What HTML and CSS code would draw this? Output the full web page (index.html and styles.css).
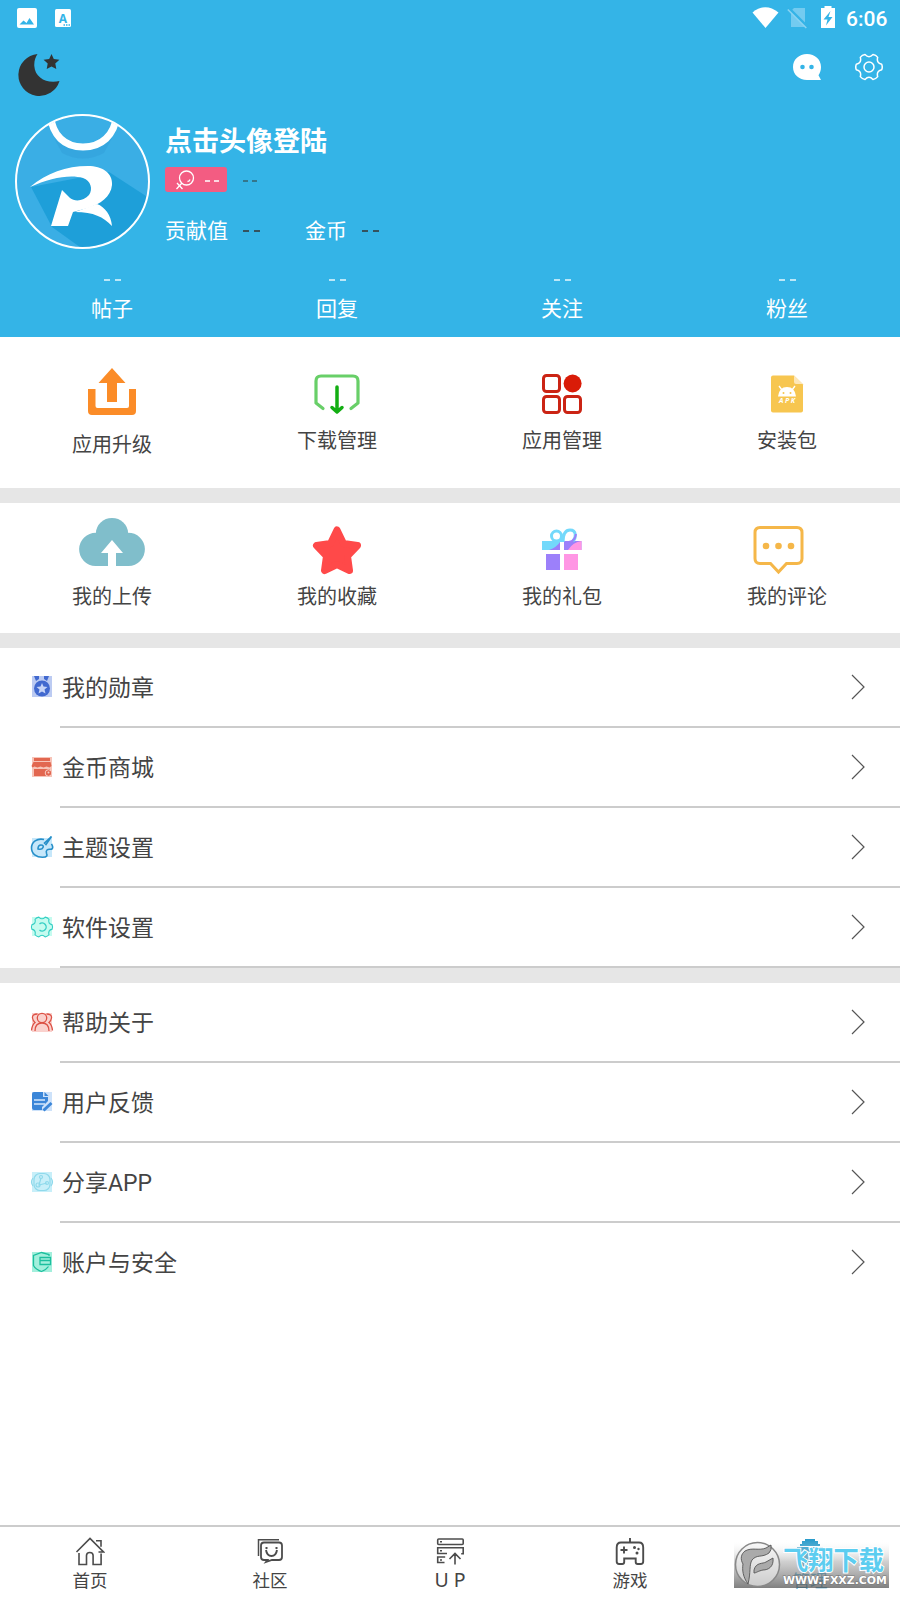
FILE: index.html
```html
<!DOCTYPE html>
<html lang="zh-CN">
<head>
<meta charset="utf-8">
<title>我的</title>
<link rel="stylesheet" href="styles.css">
</head>
<body>
<div class="screen">
  <header class="header">
    <div class="status">
      <svg class="status-left" viewBox="16 6 56 24" width="56" height="24">
        <rect x="17" y="8" width="20" height="20" rx="2" fill="#fff"/>
        <path d="M19.500 24.500l4-4 3 2.500 3-5 4.500 6.500z" fill="#34b4e7"/>
        <rect x="55" y="9" width="16" height="18" rx="1.500" fill="#fff"/>
        <text class="badge-letter" x="63" y="22.500" text-anchor="middle">A</text>
        <path d="M63.500 25h1.500M66 25h1.500M68.500 25h1.500" stroke="#34b4e7" stroke-width="1.500"/>
      </svg>
      <svg class="status-right" viewBox="752 5 85 24" width="85" height="24">
        <path d="M752.500 12.500q12.700-10.500 26 0L765.500 28z" fill="#fff"/>
        <path d="M794 8h11v19h-14V11z" fill="#73cbf0"/>
        <path d="M788.500 8l19 19" stroke="#34b4e7" stroke-width="3"/>
        <path d="M787.800 9.500l18.500 18.500" stroke="#8bd4f2" stroke-width="1.500"/>
        <path d="M821 8h3.500V6h7v2H835v20h-14z" fill="#fff"/>
        <path d="M830.500 11l-7 8.500h4l-1.500 6 6.500-8.500h-4z" fill="#34b4e7"/>
      </svg>
      <span class="clock">6:06</span>
    </div>
    <div class="toolbar">
      <svg viewBox="18 53 42 44" width="42" height="44">
        <path d="M37.500 54A21 21 0 1 0 59.500 81C47 84 35 78 34.300 66 34 61 35.500 57 37.500 54z" fill="#333"/>
        <path d="M51.500 54l2.300 5 5.600.7-4.100 3.800 1 5.500-4.800-2.600-4.800 2.600 1-5.500-4.100-3.800 5.600-.7z" fill="#333"/>
      </svg>
      <svg class="tool-chat" viewBox="792 53 30 28" width="30" height="28">
        <path d="M807 54c8 0 14 5.500 14 13 0 3.600-1 6-2.500 8.200l2.500 4.800h-14c-8 0-14-5.500-14-13s6-13 14-13z" fill="#fff"/>
        <circle cx="802.500" cy="67" r="2.300" fill="#34b4e7"/><circle cx="811.500" cy="67" r="2.300" fill="#34b4e7"/>
      </svg>
      <svg viewBox="-14 -14 28 28" width="28" height="28" fill="none" stroke="#fff" stroke-width="1.500" stroke-linejoin="round">
        <path id="gear" d="M12.700-2.700Q13.800 0 12.700 2.700 7.100 4.100 8.700 9.660 6.900 11.950 4 12.400 0 8.200-4 12.400-6.900 11.950-8.700 9.660-7.100 4.100-12.700 2.700-13.800 0-12.700-2.700-7.100-4.100-8.700-9.660-6.900-11.950-4-12.400 0-8.200 4-12.400 6.900-11.950 8.700-9.660 7.100-4.100 12.700-2.700z"/>
        <circle r="5"/>
      </svg>
    </div>
    <div class="profile">
      <svg class="avatar" viewBox="15 114 135 135" width="135" height="135">
        <defs><clipPath id="face"><circle cx="82.500" cy="181.500" r="66"/></clipPath></defs>
        <g clip-path="url(#face)">
          <rect x="15" y="114" width="135" height="135" fill="#3aaee5"/>
          <path d="M31 187L109 172 152 200V250H84L52 227z" fill="#1e9fd9"/>
          <path d="M54 138a34 26 0 0 0 58 0l-8 15q-21 11-42 0z" fill="#2e98d5" opacity=".35"/>
          <path d="M50 113c2 23 15 34 33 34s32-11 34-34" fill="none" stroke="#fff" stroke-width="7"/>
          <path d="M30 187C47 173 66 166 88 166c14 0 25 7 24 19-1 12-12 19-24 23l-15 4-5 14H51l11-36 8 8c5 4 14 3 19-3 4-6 2-14-6-17-13-4-33 0-53 9z" fill="#fff"/>
          <path d="M75 212l22-8c8 3 14 11 15 22-9-9-18-14-37-14z" fill="#fff"/>
        </g>
        <circle cx="82.500" cy="181.500" r="66.500" fill="none" stroke="#fff" stroke-width="2"/>
      </svg>
      <div class="profile-info">
        <div class="name">点击头像登陆</div>
        <div class="level-line">
          <span class="level">
            <svg viewBox="175 169 20 20" width="20" height="20" fill="none" stroke="#fff" stroke-width="1.300">
              <circle cx="186.500" cy="177" r="7"/><path d="M182 182l-5.500 6M177 182l5.500 6M187.500 180.500q2 0 2.500-2"/>
            </svg>
            <svg class="level-dash" viewBox="0 0 14 2" width="14" height="2"><path d="M0 1h5M9 1h5" stroke="#fff" stroke-width="1.500"/></svg>
          </span>
          <svg class="level-dash" viewBox="0 0 14 2" width="14" height="2"><path d="M0 1h5M9 1h5" stroke="#34616f" stroke-width="1.500"/></svg>
        </div>
        <div class="wealth">
          <span>贡献值</span>
          <svg class="dash" viewBox="0 0 17 2" width="17" height="2"><path d="M0 1h6M11 1h6" stroke="#34535f" stroke-width="1.800"/></svg>
          <span class="coins">金币</span>
          <svg class="dash" viewBox="0 0 17 2" width="17" height="2"><path d="M0 1h6M11 1h6" stroke="#34535f" stroke-width="1.800"/></svg>
        </div>
      </div>
    </div>
    <div class="stats">
      <div class="stat"><svg viewBox="0 0 17 2" width="17" height="2"><path d="M0 1h6M11 1h6" stroke="#e8f7fd" stroke-width="1.600"/></svg><span>帖子</span></div>
      <div class="stat"><svg viewBox="0 0 17 2" width="17" height="2"><path d="M0 1h6M11 1h6" stroke="#e8f7fd" stroke-width="1.600"/></svg><span>回复</span></div>
      <div class="stat"><svg viewBox="0 0 17 2" width="17" height="2"><path d="M0 1h6M11 1h6" stroke="#e8f7fd" stroke-width="1.600"/></svg><span>关注</span></div>
      <div class="stat"><svg viewBox="0 0 17 2" width="17" height="2"><path d="M0 1h6M11 1h6" stroke="#e8f7fd" stroke-width="1.600"/></svg><span>粉丝</span></div>
    </div>
  </header>

  <section class="grid grid-apps">
    <div class="cell cell-low">
      <svg viewBox="82 363 60 60" width="60" height="60" fill="#fb8c28">
        <path d="M112 368l13.500 15H117v19h-10V383h-8.500z"/>
        <path d="M88 389h7.500v17q0 2 2 2h29.500q2 0 2-2V389h7v22q0 4-4 4H92q-4 0-4-4z"/>
      </svg><span>应用升级</span>
    </div>
    <div class="cell">
      <svg viewBox="307 363 60 60" width="60" height="60" fill="none" stroke-linecap="round" stroke-linejoin="round" stroke-width="3.200">
        <path d="M323 408.500l-7-5.500V381q0-5 5-5h32q5 0 5 5v22l-7 5.500" stroke="#68cf68"/>
        <path d="M337 387v24M332 407.500l5 4.500 5-4.500" stroke="#12ae12" stroke-width="3.500"/>
      </svg><span>下载管理</span>
    </div>
    <div class="cell">
      <svg viewBox="532 363 60 60" width="60" height="60" fill="none" stroke="#cb2414" stroke-width="3">
        <rect x="543.500" y="375.500" width="16" height="16" rx="3"/><rect x="543.500" y="396.500" width="16" height="16" rx="3"/><rect x="564.500" y="396.500" width="16" height="16" rx="3"/>
        <circle cx="572.600" cy="383.500" r="9" fill="#d91c08" stroke="none"/>
      </svg><span>应用管理</span>
    </div>
    <div class="cell">
      <svg viewBox="757 363 60 60" width="60" height="60">
        <path d="M773 375.500h21l9 9v26q0 2-2 2h-28q-2 0-2-2v-33q0-2 2-2z" fill="#f7c650"/>
        <path d="M794 375.500l9 8.500h-7q-2 0-2-2z" fill="#fde7b8"/>
        <path d="M778 396.500q1-9.500 9-9.500t9 9.500z" fill="#fff"/>
        <path d="M779 386l3 4M795 386l-3 4" stroke="#fff" stroke-width="1.300"/>
        <circle cx="783.500" cy="393" r="1" fill="#f7c650"/><circle cx="790.500" cy="393" r="1" fill="#f7c650"/>
        <text class="apk" x="787" y="403" text-anchor="middle" textLength="16">APK</text>
      </svg><span>安装包</span>
    </div>
  </section>

  <section class="grid grid-mine">
    <div class="cell">
      <svg viewBox="77 515 70 60" width="70" height="60">
        <path d="M95.500 566a16.500 16.500 0 0 1 .5-33.300a16.300 16.300 0 0 1 32 0A16.600 16.600 0 0 1 128.500 566H116V553h7l-11-13-11 13h7v13z" fill="#80becb"/>
        <path d="M96 533a16 15 0 0 1 32 0z" fill="#80becb"/>
      </svg><span>我的上传</span>
    </div>
    <div class="cell">
      <svg viewBox="302 515 70 60" width="70" height="60">
        <path d="M337 530l6.500 13.500 14 2-10 10.500 2 14.500-12.500-6-12.500 6 2-14.500-10-10.500 14-2z" fill="#ff4949" stroke="#ff4949" stroke-width="7" stroke-linejoin="round"/>
      </svg><span>我的收藏</span>
    </div>
    <div class="cell">
      <svg viewBox="527 515 70 60" width="70" height="60">
        <path d="M542 541h18v9h-18z" fill="#73d9fb"/><path d="M549 550q8-3 11-8v8z" fill="#9c80fa"/>
        <path d="M564 541h17.500v9H564z" fill="#9c80fa"/><path d="M568 550q5-8 13.500-9v9z" fill="#ff96e4"/>
        <path d="M546 554h14v16h-14z" fill="#9c80fa"/><path d="M564 554h14v16h-14z" fill="#ff96e4"/>
        <g fill="none" stroke="#73d9fb" stroke-width="3"><circle cx="556.500" cy="536" r="5"/><path d="M563 542c0-9 3-12 7-12 7 0 6 8 3 11"/></g>
        <path d="M576 534q-1 7-7 8" fill="none" stroke="#9c80fa" stroke-width="2"/>
        <path d="M559 542l4-8v8z" fill="#73d9fb"/>
      </svg><span>我的礼包</span>
    </div>
    <div class="cell">
      <svg class="comment" viewBox="743 515 70 60" width="70" height="60" fill="none" stroke="#f5b749" stroke-width="3">
        <path d="M760 527.500h37q5 0 5 5v26q0 5-5 5h-10.500l-8 8.500-8-8.500H760q-5 0-5-5v-26q0-5 5-5z"/>
        <g fill="#f5b749" stroke="none"><circle cx="766" cy="546" r="3.300"/><circle cx="778.500" cy="546" r="3.300"/><circle cx="791" cy="546" r="3.300"/></g>
      </svg><span>我的评论</span>
    </div>
  </section>

  <section class="list">
    <div class="row">
      <svg class="row-icon" viewBox="30 675 24 24" width="24" height="24">
        <rect x="32" y="676" width="20" height="21" fill="#bccbf2"/>
        <path d="M34 676h5v3l-3 2zM44 676h5l-2 5-3-2z" fill="#4169cf"/><circle cx="42" cy="688.500" r="8" fill="#4169cf"/>
        <path d="M42 683l1.500 3.600 4 .4-3 2.600 1 3.900-3.500-2-3.500 2 1-3.900-3-2.600 4-.4z" fill="#c6d4f7"/>
      </svg>
      <div class="row-body"><span>我的勋章</span><svg class="chevron" viewBox="0 0 14 26" width="14" height="26"><path d="M1 1l12 12L1 25"/></svg></div>
    </div>
    <div class="row">
      <svg class="row-icon" viewBox="30 755 24 24" width="24" height="24">
        <rect x="32" y="757" width="20" height="20" fill="#f7c4b8"/>
        <path d="M34 758h16v3H34zM33.500 762h17l1 4-2 1.500-3-1-3 1-3-1-3 1-3-1-2 1-1-1.500z" fill="#e26750"/>
        <path d="M34 769h16v7H34z" fill="#e26750"/><circle cx="48.500" cy="773" r="3.300" fill="#e26750" stroke="#f9d0c8"/><circle cx="48.500" cy="772.500" r="1" fill="#f9d0c8"/>
      </svg>
      <div class="row-body"><span>金币商城</span><svg class="chevron" viewBox="0 0 14 26" width="14" height="26"><path d="M1 1l12 12L1 25"/></svg></div>
    </div>
    <div class="row">
      <svg class="row-icon" viewBox="30 835 24 24" width="24" height="24" fill="none" stroke="#268fc9" stroke-width="1.600">
        <rect x="32" y="838" width="20" height="19" fill="#c6e7fa" stroke="none"/>
        <path d="M44 839.500C37 838 31.500 842 31.500 848s5 9.300 11 9.300c5 0 5-2 4-4-1-3 1-4.500 4-4 3 0 2.500-3 1-5.500"/>
        <path d="M51.500 836.500l-7 6.500 1.500 1.500zM38 849q0-4 3-4t2 2.500-5 1.500z"/>
      </svg>
      <div class="row-body"><span>主题设置</span><svg class="chevron" viewBox="0 0 14 26" width="14" height="26"><path d="M1 1l12 12L1 25"/></svg></div>
    </div>
    <div class="row">
      <svg class="row-icon" viewBox="30 915 24 24" width="24" height="24" fill="none" stroke="#35cfc4" stroke-width="1.400">
        <rect x="32" y="917" width="20" height="19" fill="#c5fbef" stroke="none"/>
        <use href="#gear" transform="translate(42 927) scale(.8)"/><path d="M39.500 924a4 4 0 1 1 0 6"/>
      </svg>
      <div class="row-body"><span>软件设置</span><svg class="chevron" viewBox="0 0 14 26" width="14" height="26"><path d="M1 1l12 12L1 25"/></svg></div>
    </div>
  </section>

  <section class="list">
    <div class="row">
      <svg class="row-icon" viewBox="30 1010 24 24" width="24" height="24" fill="none" stroke="#dc5145" stroke-width="1.300">
        <rect x="32" y="1013" width="20" height="19" fill="#fad1cd" stroke="none"/>
        <circle cx="42" cy="1018" r="4.700"/><path d="M35 1031q0-8 7-8t7 8M46.500 1014q5.500 0 5 4-.5 3-2.500 4.500 3 2.500 3.500 8M37.500 1014q-5.500 0-5 4 .5 3 2.500 4.500-3 2.500-3.500 8"/>
      </svg>
      <div class="row-body"><span>帮助关于</span><svg class="chevron" viewBox="0 0 14 26" width="14" height="26"><path d="M1 1l12 12L1 25"/></svg></div>
    </div>
    <div class="row">
      <svg class="row-icon" viewBox="30 1090 24 24" width="24" height="24">
        <rect x="32" y="1092" width="20" height="19" fill="#cde2fa"/>
        <path d="M34 1092h9v5h5v4l-6 6v3h-8q-2 0-2-2v-14q0-2 2-2zM44.500 1092l4 4h-4z" fill="#3b86d8"/>
        <path d="M34 1100h11M34 1104h11" stroke="#d5e8fc" stroke-width="1.500"/><path d="M43.500 1110.500l8-7.500" stroke="#3b86d8" stroke-width="3"/>
      </svg>
      <div class="row-body"><span>用户反馈</span><svg class="chevron" viewBox="0 0 14 26" width="14" height="26"><path d="M1 1l12 12L1 25"/></svg></div>
    </div>
    <div class="row">
      <svg class="row-icon" viewBox="30 1170 24 24" width="24" height="24" fill="none" stroke="#8fd9eb" stroke-width="1.200">
        <rect x="32" y="1172" width="20" height="20" fill="#c8eff9" stroke="none"/>
        <rect x="34" y="1173.500" width="16" height="17" rx="6"/><path d="M33 1178q-3 4 0 8M51 1178q3 4 0 8M41 1178l-2 7 8-2"/><circle cx="41" cy="1177" r="1.500"/><circle cx="38" cy="1185" r="2"/><circle cx="47" cy="1183" r="1.500"/>
      </svg>
      <div class="row-body"><span class="latin">分享APP</span><svg class="chevron" viewBox="0 0 14 26" width="14" height="26"><path d="M1 1l12 12L1 25"/></svg></div>
    </div>
    <div class="row row-last">
      <svg class="row-icon" viewBox="30 1250 24 24" width="24" height="24" fill="none" stroke="#1cbf9e" stroke-width="1.300">
        <rect x="32" y="1252" width="20" height="20" fill="#a3efdc" stroke="none"/>
        <path d="M49 1256v-1.500l-7.500-2-8 3v10q2 4 8 6 5-2 7-5M40 1257.500h10.500v7H40zM40 1260.500h10.500"/>
      </svg>
      <div class="row-body"><span>账户与安全</span><svg class="chevron" viewBox="0 0 14 26" width="14" height="26"><path d="M1 1l12 12L1 25"/></svg></div>
    </div>
  </section>

  <nav class="tabs">
    <div class="tab">
      <svg viewBox="75 1536 30 30" width="30" height="30" fill="none" stroke="#4c4c4c" stroke-width="1.600">
        <path d="M76.500 1552L90 1538.500l13.500 13.500h-5M96 1540.800h5v6M79 1553v11.500h7.500v-9q0-3 3.300-3t3.300 3v9h8v-11"/>
      </svg><span>首页</span>
    </div>
    <div class="tab">
      <svg viewBox="255 1536 30 30" width="30" height="30" fill="none" stroke="#4c4c4c" stroke-width="1.500">
        <path d="M258.500 1556v-16.200h20.500"/><path d="M264 1542.500h15q3 0 3 3v11.500q0 3-3 3h-7l-6 2 1.500-2H264q-3 0-3-3v-11.500q0-3 3-3z" stroke-width="1.800"/><path d="M266 1550q1 6 5.500 6t5.500-6M265.500 1548h2M275.500 1548h2" stroke-width="1.900"/>
      </svg><span>社区</span>
    </div>
    <div class="tab">
      <svg viewBox="435 1536 30 30" width="30" height="30" fill="none" stroke="#4c4c4c" stroke-width="1.600">
        <rect x="437.700" y="1539" width="25.500" height="5.500" rx="1"/><path d="M447 1553.500h-9.300v-5.700h25.500v6h-2M444.500 1562.500h-6.800v-5.500h7.500M455 1564.500v-11M449.500 1559l5.500-5.500 5.500 5.500M440 1541.800h2M440 1550.800h2M440 1560h2"/>
      </svg><span class="up">U P</span>
    </div>
    <div class="tab">
      <svg viewBox="615 1536 30 30" width="30" height="30" fill="none" stroke="#4c4c4c" stroke-width="1.900">
        <path d="M621 1542.500h18q4.200 0 4.200 5v14q0 2.500-2.500 2.500h-3q-2 0-2-2v-3.500h-11.500v3.500q0 2-2 2h-3q-2.500 0-2.500-2.500v-14q0-5 4.300-5zM630 1538v4M624 1546.500v7M620.500 1550h7"/>
        <g fill="#4c4c4c" stroke="none"><circle cx="634.500" cy="1547.500" r="1.500"/><circle cx="638.500" cy="1549" r="1.200"/><circle cx="637" cy="1553" r="1.500"/></g>
      </svg><span>游戏</span>
    </div>
    <div class="tab tab-active">
      <svg viewBox="795 1536 30 30" width="30" height="30" fill="#2b9ccb"><path d="M805 1539h10v2h3v3h2v2h-20v-2h2v-3h3zM797 1547h26v5h-4q-2 8-9 8t-9-8h-4z"/><path d="M798 1566q0-6 12-6t12 6z"/></svg><span>管理</span>
      <svg class="watermark" viewBox="734 1540 155 48" width="155" height="48">
        <defs>
          <linearGradient id="shade" x1="0" y1="0" x2="0" y2="1"><stop offset="0" stop-color="#fff" stop-opacity="0"/><stop offset=".45" stop-color="#b0b0b0" stop-opacity=".6"/><stop offset="1" stop-color="#606060" stop-opacity=".8"/></linearGradient>
          <linearGradient id="disc" x1="0" y1="0" x2="0" y2="1"><stop offset="0" stop-color="#f8f8f8"/><stop offset="1" stop-color="#ccc"/></linearGradient>
        </defs>
        <rect x="734" y="1540" width="155" height="48" fill="url(#shade)"/>
        <circle cx="757.500" cy="1564.500" r="22" fill="url(#disc)" stroke="#888" stroke-width="1.500"/>
        <path d="M748 1584c-5-7-6-14-5-20-3-5-2-10 2-13 7-4 14 0 21-3l5-3q1 5-2 8c-7 5-12 1-17 7-3 5-1 12-4 24zM754 1570c2-8 9-6 12-8l7-4c1 9-5 12-10 12-5 1-7 3-9 3z" fill="#aaa" stroke="#555" stroke-width=".9"/>
        <text class="brand" x="783" y="1570" textLength="101" lengthAdjust="spacingAndGlyphs">飞翔下载</text>
        <text class="site" x="783" y="1584" textLength="104" lengthAdjust="spacingAndGlyphs">WWW.FXXZ.COM</text>
      </svg>
    </div>
  </nav>
</div>
</body>
</html>
```
FILE: styles.css
```css
* { box-sizing: border-box; }
body { margin: 0; background: #fff; font-family: "Noto Sans CJK SC", sans-serif; color: #444; }
svg { display: block; flex: none; }
.screen { display: flex; flex-direction: column; width: 900px; height: 1600px; overflow: hidden; }

.header { height: 337px; background: #34b4e7; color: #fff; flex: none; }
.status { display: flex; height: 36px; padding: 0 12px 0 16px; align-items: center; }
.status-right { margin-left: auto; margin-top: -2px; }
.clock { width: 42px; margin-left: 9px; font: 500 21px/36px Roboto, sans-serif; white-space: nowrap; padding-top: 1px; }
.badge-letter { font: bold 12px "Noto Sans", sans-serif; fill: #34b4e7; }
.toolbar { display: flex; height: 78px; padding: 17px 17px 0 18px; }
.tool-chat { margin-left: auto; margin-right: 33px; }
.profile { display: flex; height: 156px; padding-left: 15px; }
.profile-info { padding: 7px 0 0 15px; }
.name { font-size: 27px; font-weight: 700; line-height: 38px; }
.level-line { display: flex; align-items: center; gap: 16px; height: 25px; margin-top: 8px; }
.level { display: flex; align-items: center; gap: 10px; width: 62px; height: 25px; padding-left: 10px; border-radius: 3px; background: #f35c82; }
.level-dash { margin-top: 2px; }
.wealth { display: flex; align-items: center; height: 30px; margin-top: 22px; font-size: 21px; line-height: 30px; }
.dash { margin-left: 15px; margin-top: 4px; }
.coins { margin-left: 45px; }
.stats { display: grid; grid-template-columns: repeat(4, 1fr); padding-top: 9px; }
.stat { display: flex; flex-direction: column; align-items: center; gap: 11px; padding-right: 1px; font-size: 21px; line-height: 30px; }

.grid { display: grid; grid-template-columns: repeat(4, 1fr); flex: none; border-bottom: 15px solid #e6e6e6; font-size: 20px; line-height: 30px; }
.grid-apps { height: 166px; padding-top: 26px; }
.grid-mine { height: 145px; padding-top: 12px; }
.cell { display: flex; flex-direction: column; align-items: center; gap: 2px; padding-right: 1px; }
.cell > svg { margin-right: 1px; }
.cell-low { gap: 6px; }
.grid-mine .cell { gap: 6px; }
.cell > .comment { margin-left: -18px; }
.apk { font: italic bold 7px "Noto Sans", sans-serif; fill: #fff; }

.list { flex: none; }
.list + .list { border-top: 15px solid #e6e6e6; }
.row { display: flex; height: 80px; padding-left: 30px; }
.row-icon { margin: 27px 6px 0 0; }
.row-body { display: flex; flex: 1; justify-content: space-between; align-items: center; padding: 0 35px 0 2px; border-bottom: 2px solid #ccc; font-size: 23px; }
.row-body > span { padding-bottom: 2px; }
.row-last .row-body { border-color: transparent; }
.latin { font-family: Roboto, "Noto Sans CJK SC", sans-serif; }
.chevron { fill: none; stroke: #555; stroke-width: 1.2; }

.tabs { display: grid; grid-template-columns: repeat(5, 1fr); height: 75px; margin-top: auto; border-top: 2px solid #ccc; font-size: 17.500px; line-height: 26px; }
.tab { display: flex; flex-direction: column; align-items: center; gap: 1px; padding-top: 9px; position: relative; }
.tab-active { color: #1f91c2; }
.up { font-family: "Noto Sans", sans-serif; font-size: 19.500px; }
.watermark { position: absolute; left: 14px; top: 13px; }
.brand { font: bold 26px "Noto Sans CJK SC", sans-serif; fill: #5ccdf0; stroke: #fff; stroke-width: 2px; paint-order: stroke; }
.site { font: bold 11px "DejaVu Sans", sans-serif; fill: #fff; stroke: #777; stroke-width: 1px; paint-order: stroke; }
```
